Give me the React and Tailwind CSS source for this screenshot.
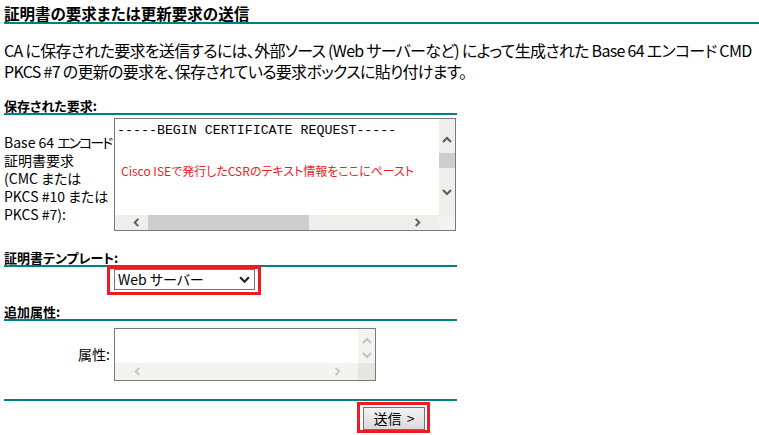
import React from 'react';

const Chevron = ({ dir, color = '#5f5f5f', size = 10, sw = 2.2 }) => {
  const pts = {
    up: '1,7 5,3 9,7',
    down: '1,3 5,7 9,3',
    left: '7,1 3,5 7,9',
    right: '3,1 7,5 3,9',
  }[dir];
  return (
    <svg width={size} height={size} viewBox="0 0 10 10" className="block">
      <polyline points={pts} fill="none" stroke={color} strokeWidth={sw} />
    </svg>
  );
};

const SectionHeading = ({ children, className = '' }) => (
  <div className={`border-b-2 border-[#008080] text-[13px] font-bold leading-[15px] ${className}`}>
    {children}
  </div>
);

const RequestBox = () => (
  <div className="flex h-[113px] w-[342px] border border-[#7a7a7a] bg-white">
    <div className="flex flex-1 flex-col">
      <div className="flex-1 pl-[2px] pt-[4px]">
        <div className="font-['Liberation_Mono',monospace] text-[13.3px] leading-[15px] whitespace-nowrap">
          -----BEGIN CERTIFICATE REQUEST-----
        </div>
        <div className="mt-[26px] pl-[4px] text-[12px] leading-[14px] whitespace-nowrap text-[#ed1c24]">
          Cisco ISEで発行したCSRのテキスト情報をここにペースト
        </div>
      </div>
      <div className="flex h-[15px] items-center bg-[#eeeeea] pl-[17px] pr-[17px]">
        <Chevron dir="left" size={9} />
        <div className="ml-[7px] h-full w-[161px] bg-[#cdcdcd]" />
        <div className="flex-1" />
        <Chevron dir="right" size={9} />
      </div>
    </div>
    <div className="flex w-[16px] flex-col items-center bg-[#eeeeea]">
      <div className="mt-[16px]">
        <Chevron dir="up" size={10} />
      </div>
      <div className="mt-[8px] h-[15px] w-full bg-[#cdcdcd]" />
      <div className="mt-[19px]">
        <Chevron dir="down" size={10} />
      </div>
      <div className="flex-1" />
      <div className="h-[15px] w-full bg-[#f2f2ee]" />
    </div>
  </div>
);

const AttributeBox = () => (
  <div className="flex h-[53px] w-[262px] border border-[#7a7a7a] bg-white">
    <div className="flex flex-1 flex-col">
      <div className="flex-1" />
      <div className="flex h-[17px] items-center bg-[#f3f3f0] pl-[18px] pr-[16px]">
        <Chevron dir="left" size={9} color="#c4c4c4" />
        <div className="flex-1" />
        <Chevron dir="right" size={9} color="#c4c4c4" />
      </div>
    </div>
    <div className="flex w-[17px] flex-col items-center bg-[#f3f3f0]">
      <div className="mt-[7px]">
        <Chevron dir="up" size={10} color="#c4c4c4" />
      </div>
      <div className="mt-[4px]">
        <Chevron dir="down" size={10} color="#c4c4c4" />
      </div>
      <div className="flex-1" />
      <div className="h-[17px] w-full bg-[#e6e6e0]" />
    </div>
  </div>
);

export default function App() {
  return (
    <div className="min-h-screen bg-white pl-[4px] text-black font-['Noto_Sans_CJK_JP',sans-serif] [font-feature-settings:'palt']">
      <div className="border-b-2 border-[#008080] pt-[4px] text-[15.5px] font-bold leading-[18px]">
        証明書の要求または更新要求の送信
      </div>

      <p className="mt-[16px] text-[16px] leading-[21px] tracking-[-0.7px] whitespace-nowrap">
        CA に保存された要求を送信するには、外部ソース (Web サーバーなど) によって生成された Base 64 エンコード CMD
        <br />
        PKCS #7 の更新の要求を、保存されている要求ボックスに貼り付けます。
      </p>

      <div className="w-[453px]">
        <SectionHeading className="mt-[16px]">保存された要求:</SectionHeading>
        <div className="mt-[3px] flex items-center">
          <div className="w-[110px] pt-[6px] text-[14px] leading-[18px] whitespace-nowrap">
            Base 64 <span className="tracking-[-2px]">エンコード</span>
            <br />
            証明書要求
            <br />
            (CMC または
            <br />
            PKCS #10 または
            <br />
            PKCS #7):
          </div>
          <RequestBox />
        </div>

        <SectionHeading className="mt-[19px]">証明書テンプレート:</SectionHeading>
        <div className="mt-[2px] flex">
          <div className="w-[110px]" />
          <div className="relative">
            <div className="flex h-[21px] w-[141px] items-center justify-between border border-[#767676] bg-white pl-[3px] pr-[4px] text-[14px]">
              <span>Web サーバー</span>
              <Chevron dir="down" size={11} color="#222222" sw={2} />
            </div>
            <div className="pointer-events-none absolute -bottom-[5px] -left-[7px] -right-[6px] -top-[3px] border-[3px] border-[#ed1c24]" />
          </div>
        </div>

        <SectionHeading className="mt-[14px]">追加属性:</SectionHeading>
        <div className="mt-[7px] flex items-center">
          <div className="w-[110px] pr-[4px] text-right text-[14px]">属性:</div>
          <AttributeBox />
        </div>

        <div className="mt-[18px] border-t-2 border-[#008080]" />
        <div className="mt-[4px] flex justify-end pr-[32px]">
          <div className="relative">
            <button className="h-[23px] w-[62px] border border-[#707070] bg-gradient-to-b from-[#f4f4f4] to-[#dadada] text-[14px] leading-[20px]">
              送信 <span className="ml-[2px]">&gt;</span>
            </button>
            <div className="pointer-events-none absolute -bottom-[3px] -left-[6px] -right-[5px] -top-[3px] border-[3px] border-[#ed1c24]" />
          </div>
        </div>
      </div>
    </div>
  );
}
